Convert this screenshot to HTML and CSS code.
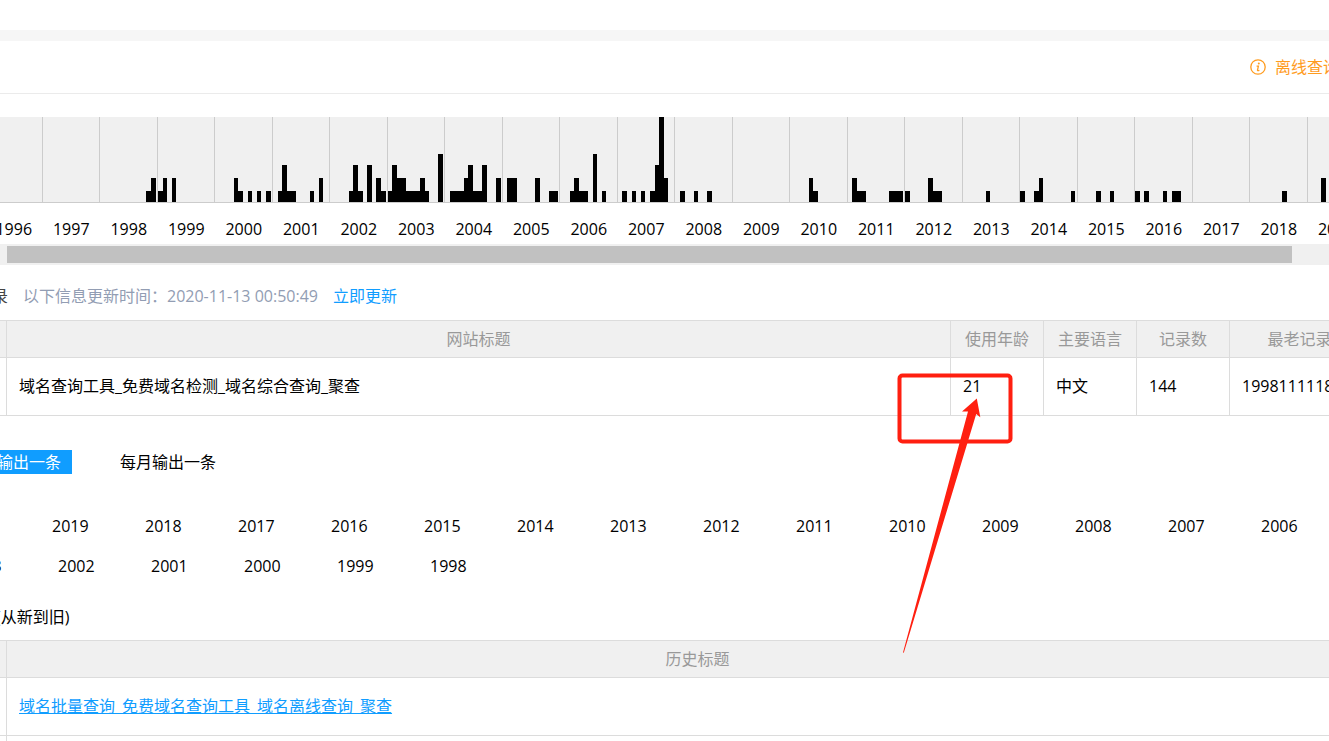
FILE: index.html
```html
<!DOCTYPE html>
<html lang="zh-CN">
<head>
<meta charset="utf-8">
<title>域名历史查询</title>
<link rel="stylesheet" href="styles.css">
</head>
<body>
<main class="page">
  <div class="band"></div>
  <header class="topbar">
    <a class="offline" href="#">
      <svg class="info-icon" viewBox="0 0 16 16" aria-hidden="true">
        <circle cx="8" cy="8" r="7.2" fill="none" stroke="#ff9c1f" stroke-width="1.3"/>
        <circle cx="8.8" cy="4.6" r="1" fill="#ff9c1f"/>
        <path d="M6.6 7.2H8.4L7.5 11.2Q7.4 12 9.4 11.3" fill="none" stroke="#ff9c1f" stroke-width="1.3"/>
      </svg>
      <span>离线查询</span>
    </a>
  </header>

  <section class="timeline">
    <div class="strip">
      <svg class="chart" viewBox="-15 0 1380 86" shape-rendering="crispEdges" role="img" aria-label="每月记录数">
        <path fill="#f0f0f0" d="M-15 0H1365V85H-15z"/>
        <path fill="#ccc" d="M-15 85h1380v1H-15zM42 0h1v85h-1zM99 0h1v85h-1zM157 0h1v85h-1zM214 0h1v85h-1zM272 0h1v85h-1zM329 0h1v85h-1zM387 0h1v85h-1zM444 0h1v85h-1zM502 0h1v85h-1zM559 0h1v85h-1zM617 0h1v85h-1zM674 0h1v85h-1zM732 0h1v85h-1zM789 0h1v85h-1zM847 0h1v85h-1zM904 0h1v85h-1zM962 0h1v85h-1zM1019 0h1v85h-1zM1077 0h1v85h-1zM1134 0h1v85h-1zM1192 0h1v85h-1zM1249 0h1v85h-1zM1307 0h1v85h-1z"/>
        <path d="M146 85V74H151V61H156V85zM158 85V74H163V61H167V85zM172 85V61H176V85z
          M234 85V61H238V74H243V85zM248 85V74H252V85zM257 85V74H261V85zM266 85V74H271V85z
          M278 85V74H282V48H287V74H296V85zM310 85V74H314V85zM319 85V61H323V85z
          M349 85V74H353V48H358V74H363V85zM367 85V48H372V85zM376 85V61H381V74H386V85z
          M388 85V74H392V48H397V61H406V74H420V61H425V74H429V85zM438 85V37H443V85z
          M450 85V74H464V61H468V48H473V74H482V48H487V85zM496 85V61H501V85z
          M507 85V61H517V85zM535 85V61H540V85zM549 85V74H558V85z
          M570 85V74H574V61H579V74H588V85zM593 85V37H597V85zM602 85V74H606V85z
          M622 85V74H627V85zM632 85V74H636V85zM641 85V74H645V85zM650 85V74H655V48H659V0H664V61H668V85z
          M680 85V74H685V85zM694 85V74H698V85zM707 85V74H712V85z
          M809 85V61H813V74H818V85zM852 85V61H857V74H866V85zM889 85V74H903V85z
          M905 85V74H910V85zM928 85V61H933V74H942V85zM986 85V74H990V85z
          M1020 85V74H1025V85zM1034 85V74H1039V61H1043V85zM1071 85V74H1075V85z
          M1096 85V74H1101V85zM1110 85V74H1114V85zM1135 85V74H1140V85zM1144 85V74H1149V85z
          M1163 85V74H1167V85zM1172 85V74H1181V85zM1282 85V74H1287V85zM1321 85V61H1326V85z"/>
      </svg>
      <div class="axis">
        <span>1996</span><span>1997</span><span>1998</span><span>1999</span><span>2000</span><span>2001</span><span>2002</span><span>2003</span><span>2004</span><span>2005</span><span>2006</span><span>2007</span><span>2008</span><span>2009</span><span>2010</span><span>2011</span><span>2012</span><span>2013</span><span>2014</span><span>2015</span><span>2016</span><span>2017</span><span>2018</span><span>2019</span>
      </div>
    </div>
    <div class="scrollbar"><div class="thumb"></div></div>
  </section>

  <div class="update">
    <span class="record">录</span>
    <span class="time">以下信息更新时间：2020-11-13 00:50:49</span>
    <a class="link" href="#">立即更新</a>
  </div>

  <table class="grid summary">
    <colgroup><col class="c-edge"><col><col class="c-num"><col class="c-num"><col class="c-num"><col class="c-old"></colgroup>
    <thead><tr><th></th><th>网站标题</th><th>使用年龄</th><th>主要语言</th><th>记录数</th><th>最老记录</th></tr></thead>
    <tbody><tr><td></td><td>域名查询工具_免费域名检测_域名综合查询_聚查</td><td>21</td><td>中文</td><td>144</td><td>1998111118</td></tr></tbody>
  </table>

  <div class="modes">
    <button class="mode active" type="button">输出一条</button>
    <button class="mode" type="button">每月输出一条</button>
  </div>

  <nav class="years">
    <div class="year-row first">
      <a href="#">2019</a><a href="#">2018</a><a href="#">2017</a><a href="#">2016</a><a href="#">2015</a><a href="#">2014</a><a href="#">2013</a><a href="#">2012</a><a href="#">2011</a><a href="#">2010</a><a href="#">2009</a><a href="#">2008</a><a href="#">2007</a><a href="#">2006</a>
    </div>
    <div class="year-row second">
      <a href="#">2003</a><a href="#">2002</a><a href="#">2001</a><a href="#">2000</a><a href="#">1999</a><a href="#">1998</a>
    </div>
  </nav>

  <p class="order">(从新到旧)</p>

  <table class="grid history">
    <colgroup><col class="c-edge"><col></colgroup>
    <thead><tr><th></th><th>历史标题</th></tr></thead>
    <tbody>
      <tr><td></td><td><a class="link underlined" href="#">域名批量查询_免费域名查询工具_域名离线查询_聚查</a></td></tr>
      <tr><td></td><td></td></tr>
    </tbody>
  </table>

  <svg class="callout" viewBox="0 0 120 284" aria-hidden="true">
    <rect x="4.5" y="4.5" width="111" height="66" rx="3" fill="none" stroke="#ff1f10" stroke-width="4"/>
    <path fill="#ff1f10" d="M81.8 27.5L85.3 46.3L81.2 43L8.8 281.8L8 281.4L73 40.4L67 40.6z"/>
  </svg>
</main>
</body>
</html>
```
FILE: styles.css
```css
* { box-sizing: border-box; }

body {
  margin: 0;
  background: #fff;
  color: #000;
  font: 16px/24px "Open Sans", "Noto Sans CJK SC", sans-serif;
}

a { color: inherit; text-decoration: none; }

.page {
  position: relative;
  height: 100vh;
  padding-top: 30px;
  overflow: hidden;
}

.band { height: 11px; background: #f6f6f6; }

.topbar {
  display: flex;
  justify-content: flex-end;
  align-items: center;
  height: 53px;
  border-bottom: 1px solid #ebebeb;
}

.offline {
  display: flex;
  align-items: center;
  gap: 9px;
  margin-right: -10px;
  color: #ff9c1f;
}

.info-icon { width: 16px; height: 16px; }

.timeline { margin-top: 23px; overflow: hidden; }
.strip { width: 1380px; margin-left: -15px; }
.chart { display: block; width: 100%; }

.axis {
  display: grid;
  grid-template-columns: repeat(24, 1fr);
  padding: 14px 0 3px;
  text-align: center;
}

.scrollbar { padding: 2px 37px 2px 7px; background: #f0f0f0; }
.thumb { height: 17px; background: #c1c1c1; }

.update {
  display: flex;
  gap: 15px;
  margin: 19px 0 12px -8px;
}
.record { color: #444; }
.time { color: #929db3; }
.link { color: #109dff; }
.underlined {
  text-decoration: underline;
  text-decoration-skip-ink: none;
}

.grid {
  table-layout: fixed;
  border-spacing: 0;
  border-top: 1px solid #dcdcdc;
}
.summary { width: calc(100% + 41px); }
.history { width: calc(100% + 60px); }
.c-edge { width: 7px; }
.c-num { width: 93px; }
.c-old { width: 140px; }

.grid th, .grid td {
  padding: 0;
  border-right: 1px solid #dcdcdc;
  border-bottom: 1px solid #dcdcdc;
}
.grid th {
  height: 37px;
  background: #f0f0f0;
  color: #999;
  font-weight: 400;
}
.grid td { height: 58px; padding-bottom: 2px; }
.grid td + td { padding-left: 12px; }

.modes { display: flex; gap: 48px; margin: 34px 0 32px -3px; }
.mode {
  padding: 0;
  border: 0;
  background: none;
  color: #000;
  font: inherit;
}
.mode.active { padding-right: 11px; background: #109dff; color: #fff; }

.year-row {
  display: grid;
  grid-auto-flow: column;
  grid-auto-columns: 93px;
  justify-content: start;
  line-height: 40px;
}
.first { margin-left: 52px; }
.second { margin-left: -35px; }

.order { margin: 19px 0 11px -4px; }

.callout {
  position: absolute;
  left: 895px;
  top: 371px;
  width: 120px;
  height: 284px;
  pointer-events: none;
}
```
